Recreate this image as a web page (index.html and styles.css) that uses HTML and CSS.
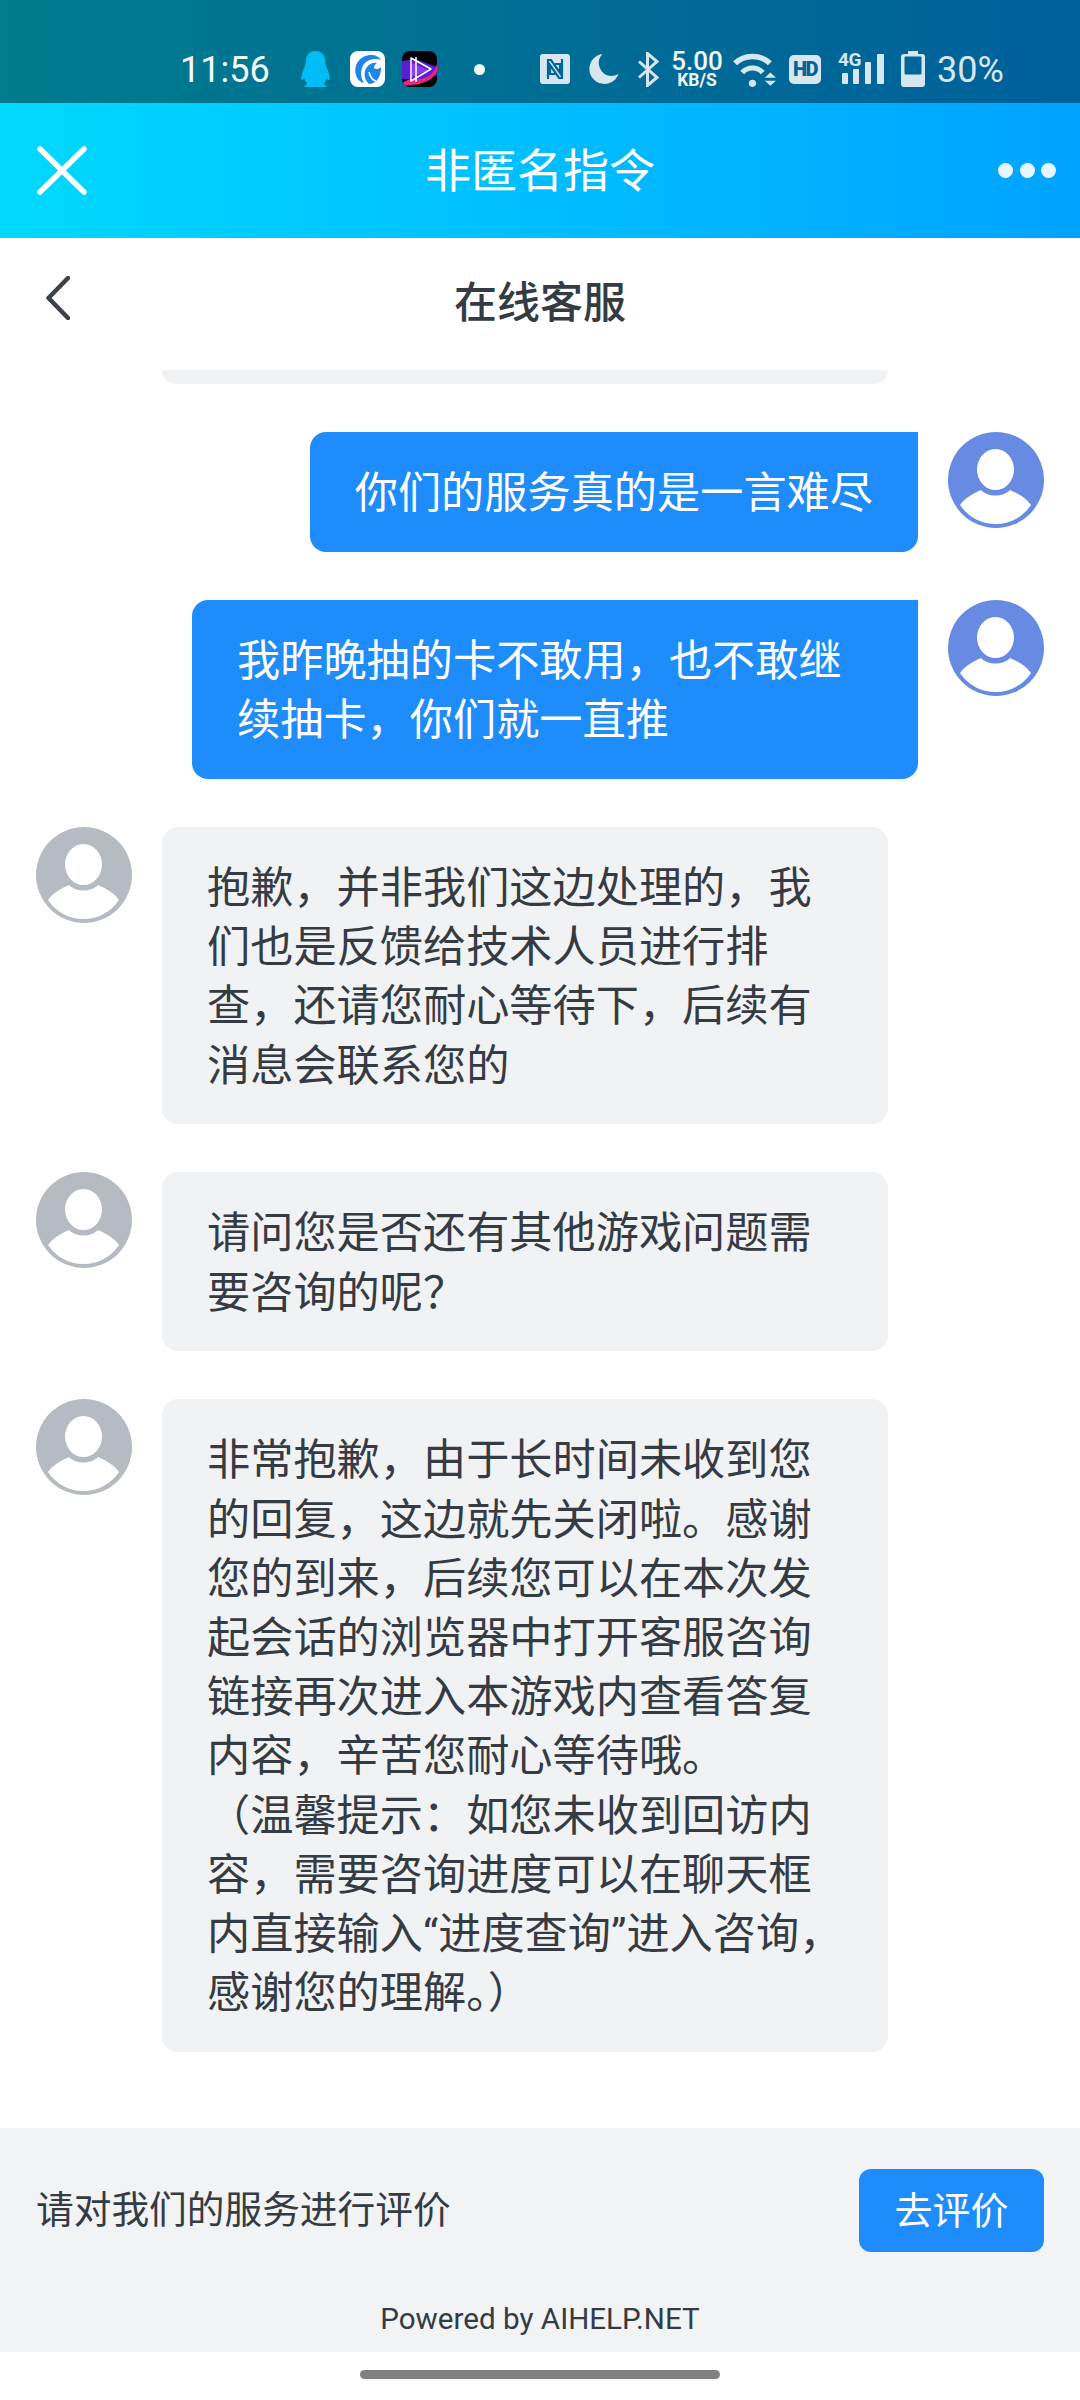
FILE: index.html
```html
<!DOCTYPE html>
<html lang="zh-CN">
<head>
    <meta charset="UTF-8">
    <meta name="viewport" content="width=device-width, initial-scale=1.0">
    <title>在线客服</title>
    <link rel="stylesheet" href="styles.css">
</head>
<body>
    <svg class="defs" width="0" height="0">
        <symbol id="avatar" viewBox="0 0 96 96">
            <circle cx="48" cy="48" r="48" fill="currentColor"/>
            <ellipse cx="47.5" cy="37.5" rx="18.5" ry="20.5" fill="#fff"/>
            <path d="M12 73 C17 66 24 62 33 58 C37 62 42 63.500 47.500 63.500 C53 63.500 58 62 62 58 C71 62 78 66 83 73 C75 85 62 92 47.500 92 C33 92 20 85 12 73Z" fill="#fff"/>
        </symbol>
    </svg>

    <div class="status-bar">
        <span class="time">11:56</span>
        <svg class="ic-qq" width="29" height="36" viewBox="0 0 28 36" preserveAspectRatio="none">
            <path d="M14 0 C20 0 23.500 4.500 23.500 11 C23.500 14 25 17 26.500 21 C27.500 24 28 27 27.500 29.500 C26.500 29 25.500 28 25 27 C24.500 29 23.500 31 22 32.500 L25 36 L3 36 L6 32.500 C4.500 31 3.500 29 3 27 C2.500 28 1.500 29 .5 29.500 C0 27 .5 24 1.500 21 C3 17 4.500 14 4.500 11 C4.500 4.500 8 0 14 0Z" fill="#00bdf8"/>
        </svg>
        <svg class="ic-app" width="35" height="36" viewBox="0 0 35 36">
            <rect width="35" height="36" rx="8" fill="#fff"/>
            <path d="M6 24 C3 13 11 4 21 4 C26 4 29 6 31 9 C26 7 20 8 16 11 C11 15 9 24 14 32 C10 31 7 28 6 24Z" fill="#1c86ea"/>
            <path d="M15 20 C17 14 22 11 27 12 C25 13 24 15 24 17 C26 19 29 18 31 16 C31 21 30 27 25 31 C23 32 21 33 19 33 C15 29 14 25 15 20Z" fill="#1c86ea"/>
            <path d="M19 21 C20 25 22 29 26 30" fill="none" stroke="#fff" stroke-width="1.500"/>
        </svg>
        <svg class="ic-video" width="35" height="36" viewBox="0 0 35 36">
            <defs><clipPath id="video-clip"><rect width="35" height="36" rx="8"/></clipPath></defs>
            <g clip-path="url(#video-clip)">
                <rect width="35" height="36" fill="#030105"/>
                <path d="M0 10 L14 8 L24 12 L35 16 L35 24 L22 30 L0 28Z" fill="#5a1fd0"/>
                <path d="M0 32 C8 26 16 30 22 27 C27 25 31 24 35 13 L35 20 C31 28 26 30 20 32 C12 35 6 33 0 36Z" fill="#e8267f"/>
                <path d="M10 12 L26 19 L10 26Z" fill="#8a3cf0"/>
                <path d="M9 7 L29 18 L9 30Z M14 6 L14 31" fill="none" stroke="#fff" stroke-width="1.500" stroke-linejoin="round"/>
            </g>
        </svg>
        <span class="dot"></span>
        <svg class="ic-nfc" width="30" height="30" viewBox="0 0 30 30">
            <rect width="30" height="30" rx="3" fill="#d6e7f2"/>
            <path d="M8 25 V6 H11 L20 19 V10 H15 M22 5 V24 H19 L10 11 V20 H15" fill="none" stroke="#00659a" stroke-width="2.200"/>
        </svg>
        <svg class="ic-moon" width="30" height="30" viewBox="0 0 29 30">
            <path d="M13 0 A15 15 0 1 0 29 20 A14 14 0 0 1 22 22 A13 13 0 0 1 13 0Z" fill="#d6e7f2"/>
        </svg>
        <svg class="ic-bt" width="21" height="35" viewBox="0 0 21 34">
            <path d="M1 9 L19 25 L9.500 33 V1 L19 9 L1 25" fill="none" stroke="#d6e7f2" stroke-width="3"/>
        </svg>
        <span class="speed"><b>5.00</b><b class="speed-unit">KB/S</b></span>
        <svg class="ic-wifi" width="44" height="35" viewBox="0 0 43 34">
            <path d="M3 11 C12 2 28 2 37 11" fill="none" stroke="#d6e7f2" stroke-width="5.500"/>
            <path d="M10 20 C15 14 25 14 30 20" fill="none" stroke="#d6e7f2" stroke-width="5"/>
            <circle cx="20" cy="30.500" r="3.500" fill="#d6e7f2"/>
            <path d="M32 25 L37.500 20 L43 25Z M32 28 L43 28 L37.500 33Z" fill="#d6e7f2"/>
        </svg>
        <span class="hd">HD</span>
        <span class="signal">
            <span class="signal-type">4G</span>
            <svg width="46" height="30" viewBox="0 0 46 30">
                <rect x="4" y="19" width="6" height="11" rx="1" fill="#d6e7f2"/>
                <rect x="15" y="15" width="6" height="15" rx="1" fill="#d6e7f2"/>
                <rect x="27" y="8" width="6" height="22" rx="1" fill="#d6e7f2"/>
                <rect x="39" y="0" width="7" height="30" rx="1" fill="#d6e7f2"/>
            </svg>
        </span>
        <svg class="ic-batt" width="24" height="36" viewBox="0 0 24 36">
            <path d="M7 0 H17 V3 H21 Q24 3 24 6 V33 Q24 36 21 36 H3 Q0 36 0 33 V6 Q0 3 3 3 H7Z" fill="#d6e7f2"/>
            <rect x="3.500" y="5.500" width="17" height="18" rx="1" fill="#00659a"/>
        </svg>
        <span class="pct">30%</span>
    </div>

    <header class="app-bar">
        <svg class="close" width="50" height="49" viewBox="0 0 50 49">
            <path d="M3 3 L47 46 M47 3 L3 46" fill="none" stroke="#fff" stroke-width="5.500" stroke-linecap="round"/>
        </svg>
        <div class="app-title">非匿名指令</div>
        <div class="more"><span></span><span></span><span></span></div>
    </header>

    <div class="chat-head">
        <svg class="back" width="24" height="44" viewBox="0 0 24 44">
            <path d="M22 2 L2.500 22 L22 42" fill="none" stroke="#3a4149" stroke-width="4.500" stroke-linecap="round" stroke-linejoin="round"/>
        </svg>
        <div class="chat-title">在线客服</div>
    </div>

    <main class="chat">
        <div class="msg-cut"></div>

        <div class="msg msg-me">
            <div class="bubble">你们的服务真的是一言难尽</div>
            <svg class="avatar"><use href="#avatar"/></svg>
        </div>
        <div class="msg msg-me">
            <div class="bubble">我昨晚抽的卡不敢用，也不敢继续抽卡，你们就一直推</div>
            <svg class="avatar"><use href="#avatar"/></svg>
        </div>
        <div class="msg">
            <svg class="avatar"><use href="#avatar"/></svg>
            <div class="bubble">抱歉，并非我们这边处理的，我们也是反馈给技术人员进行排查，还请您耐心等待下，后续有消息会联系您的</div>
        </div>
        <div class="msg">
            <svg class="avatar"><use href="#avatar"/></svg>
            <div class="bubble">请问您是否还有其他游戏问题需要咨询的呢？</div>
        </div>
        <div class="msg">
            <svg class="avatar"><use href="#avatar"/></svg>
            <div class="bubble">非常抱歉，由于长时间未收到您的回复，这边就先关闭啦。感谢您的到来，后续您可以在本次发起会话的浏览器中打开客服咨询链接再次进入本游戏内查看答复内容，辛苦您耐心等待哦。<br>（温馨提示：如您未收到回访内容，需要咨询进度可以在聊天框内直接输入“进度查询”进入咨询，感谢您的理解。）</div>
        </div>
    </main>

    <footer class="rate">
        <div class="rate-row">
            <span class="rate-text">请对我们的服务进行评价</span>
            <button class="rate-btn">去评价</button>
        </div>
        <div class="powered">Powered by AIHELP.NET</div>
    </footer>

    <div class="nav-bar"><span class="home"></span></div>
</body>
</html>
```

FILE: styles.css
```css
* {
    box-sizing: border-box;
}

body {
    margin: 0;
    width: 1080px;
    height: 2400px;
    display: flex;
    flex-direction: column;
    overflow: hidden;
    background: #fff;
    color: #353b43;
    font-family: Roboto, "Noto Sans CJK SC", sans-serif;
}

.defs {
    position: absolute;
}

/* status bar */
.status-bar {
    height: 103px;
    flex: none;
    display: flex;
    align-items: center;
    padding: 35px 0 0 180px;
    background: linear-gradient(90deg, #007c8e, #00609b);
    color: #d6e7f2;
}

.status-bar svg {
    display: block;
}

.time {
    width: 89px;
    padding-top: 2px;
    color: #f4fafc;
    font-size: 36px;
    line-height: 36px;
}

.ic-qq { margin-left: 32px; }
.ic-app { margin-left: 20px; }
.ic-video { margin-left: 17px; }

.dot {
    width: 11px;
    height: 11px;
    margin-left: 37px;
    border-radius: 50%;
    background: #f4fafc;
}

.ic-nfc { margin-left: 55px; }
.ic-moon { margin-left: 19px; }
.ic-bt { margin-left: 19px; }

.speed {
    width: 50px;
    margin-left: 13px;
    display: flex;
    flex-direction: column;
    align-items: center;
    color: #f0f7fa;
}

.speed b {
    font-size: 26px;
    font-weight: 500;
    line-height: 21px;
}

.speed .speed-unit {
    font-size: 17.5px;
    font-weight: 700;
    line-height: 16px;
}

.ic-wifi { margin-left: 10px; }

.hd {
    width: 32px;
    height: 29px;
    margin-left: 13px;
    border-radius: 5px;
    background: #d6e7f2;
    color: #00659a;
    font-size: 20px;
    font-weight: 900;
    line-height: 29px;
    text-align: center;
    letter-spacing: -1.5px;
}

.signal {
    position: relative;
    width: 46px;
    height: 32px;
    margin-left: 17px;
    padding-top: 1px;
}

.signal-type {
    position: absolute;
    left: 0;
    top: -3px;
    font-size: 19px;
    font-weight: 700;
    line-height: 20px;
    letter-spacing: -.5px;
}

.ic-batt { margin-left: 17px; }

.pct {
    margin-left: 12px;
    padding-top: 2px;
    font-size: 36px;
    line-height: 36px;
}

/* blue app bar */
.app-bar {
    height: 135px;
    flex: none;
    display: grid;
    grid-template-columns: 1fr auto 1fr;
    align-items: center;
    padding: 0 24px;
    background: linear-gradient(90deg, #00d9ff, #00a3ff);
    color: #fff;
}

.close {
    margin-left: 13px;
}

.app-title {
    font-size: 46px;
    line-height: 60px;
}

.more {
    justify-self: end;
    display: flex;
    gap: 6.5px;
}

.more span {
    width: 15px;
    height: 15px;
    border-radius: 50%;
    background: #e6f6ff;
}

/* chat */
.chat-head {
    position: relative;
    height: 132px;
    flex: none;
    display: flex;
    align-items: center;
    justify-content: center;
    padding-bottom: 2px;
}

.back {
    position: absolute;
    left: 46px;
    top: 38px;
}

.chat-title {
    font-size: 43px;
    font-weight: 500;
    line-height: 60px;
}

.chat {
    flex: 1;
    display: flex;
    flex-direction: column;
    gap: 48.1px;
    padding: 0 36px;
    font-size: 43.2px;
    line-height: 59.2px;
}

.msg-cut {
    height: 14px;
    margin: 0 156px 0 126px;
    border-radius: 0 0 16px 16px;
    background: #f1f2f4;
}

.msg {
    display: flex;
    gap: 30px;
    align-items: flex-start;
}

.msg-me {
    justify-content: flex-end;
}

.avatar {
    width: 96px;
    height: 96px;
    flex: none;
    color: #b6bac3;
}

.msg-me .avatar {
    color: #678be3;
}

.bubble {
    width: 726px;
    padding: 32px 45px 28.5px;
    border-radius: 16px;
    background: #f1f2f4;
}

.msg-me .bubble {
    width: auto;
    max-width: 726px;
    border-top-right-radius: 0;
    background: #1f8cfb;
    color: #fff;
}

/* footer */
.rate {
    height: 224px;
    flex: none;
    padding-top: 41px;
    background: #f1f3f5;
}

.rate-row {
    display: flex;
    align-items: center;
    justify-content: space-between;
    padding: 0 36px;
    font-size: 37.7px;
}

.rate-text {
    padding-bottom: 8px;
}

.rate-btn {
    width: 185px;
    height: 83px;
    padding: 0 0 6px;
    border: 0;
    border-radius: 12px;
    background: #1f8cfb;
    color: #fff;
    font-family: inherit;
    font-size: 38px;
}

.powered {
    margin-top: 49px;
    font-size: 29.6px;
    line-height: 36px;
    text-align: center;
}

.nav-bar {
    height: 48px;
    flex: none;
    padding-top: 18px;
    display: flex;
    justify-content: center;
}

.home {
    width: 360px;
    height: 9px;
    border-radius: 5px;
    background: #808080;
}
```
